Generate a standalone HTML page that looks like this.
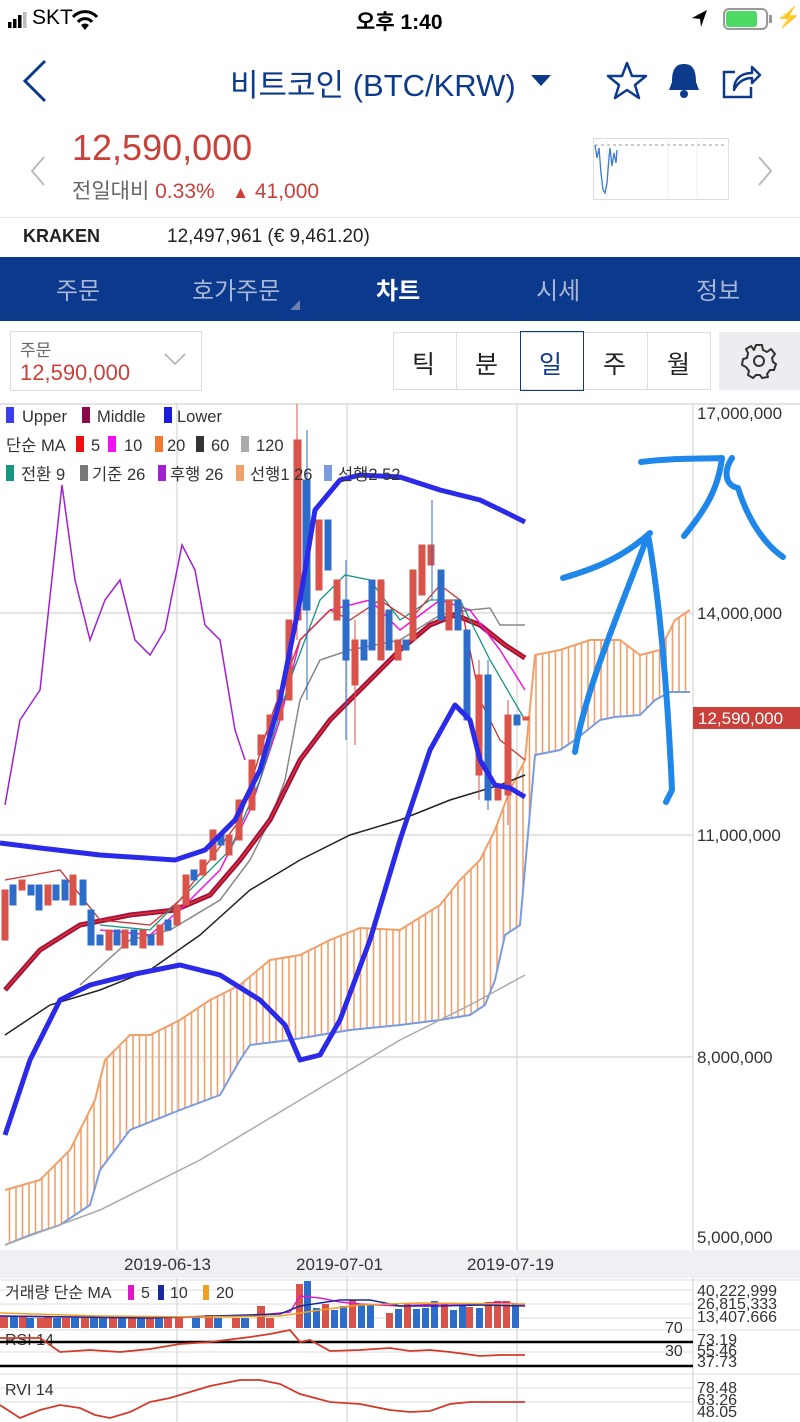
<!DOCTYPE html>
<html><head><meta charset="utf-8"><style>
*{margin:0;padding:0;box-sizing:border-box}
body{width:800px;height:1422px;overflow:hidden;background:#fff;font-family:"Liberation Sans","Noto Sans CJK KR",sans-serif;position:relative}
.a{position:absolute;white-space:nowrap}
</style></head><body>
<!-- status bar -->
<div class="a" style="left:8px;top:10px;width:14px;height:18px">
<svg width="36" height="20"><rect x="0" y="12" width="3.5" height="6" fill="#000"/><rect x="5" y="9" width="3.5" height="9" fill="#000"/><rect x="10" y="5" width="3.5" height="13" fill="#000"/><rect x="15" y="2" width="3.5" height="16" fill="#bbb"/></svg></div>
<div class="a" style="left:32px;top:6px;font-size:21px">SKT</div>
<svg class="a" style="left:70px;top:8px" width="32" height="24"><path d="M3 9 A16 16 0 0 1 27 9" stroke="#000" stroke-width="3" fill="none"/><path d="M8 14 A9 9 0 0 1 22 14" stroke="#000" stroke-width="3" fill="none"/><path d="M15 22 L11 17 A6 6 0 0 1 19 17Z" fill="#000"/></svg>
<div class="a" style="left:356px;top:6px;font-size:21px;font-weight:bold">오후 1:40</div>
<svg class="a" style="left:690px;top:8px" width="20" height="22"><path d="M17 2 L2 10 L10 11 L11 19Z" fill="#000"/></svg>
<div class="a" style="left:723px;top:8px;width:45px;height:22px;border:2px solid #999;border-radius:6px"></div>
<div class="a" style="left:726px;top:11px;width:31px;height:16px;background:#4cd964;border-radius:3px"></div>
<div class="a" style="left:769px;top:15px;width:3px;height:8px;background:#999"></div>
<div class="a" style="left:776px;top:5px;font-size:20px">⚡</div>
<!-- nav -->
<svg class="a" style="left:20px;top:58px" width="30" height="46"><path d="M25 3 L5 23 L25 43" stroke="#0d3a8a" stroke-width="3" fill="none"/></svg>
<div class="a" style="left:230px;top:60px;font-size:31px;color:#0d3a8a">비트코인 (BTC/KRW)</div>
<svg class="a" style="left:530px;top:74px" width="22" height="14"><path d="M1 1 L21 1 L11 12Z" fill="#0d3a8a"/></svg>
<svg class="a" style="left:606px;top:60px" width="44" height="40"><path d="M21 3 L26 16 L40 16 L29 25 L33 38 L21 30 L9 38 L13 25 L2 16 L16 16Z" stroke="#0d3a8a" stroke-width="2.5" fill="none" stroke-linejoin="round"/></svg>
<svg class="a" style="left:664px;top:60px" width="40" height="42"><path d="M20 4 C10 4 8 12 8 22 L5 30 L35 30 L32 22 C32 12 30 4 20 4Z" fill="#0d3a8a"/><circle cx="20" cy="34" r="4" fill="#0d3a8a"/></svg>
<svg class="a" style="left:720px;top:60px" width="42" height="42"><path d="M15 12 L4 12 L4 37 L31 37 L31 27" stroke="#0d3a8a" stroke-width="2.5" fill="none"/><path d="M14 30 C14 18 22 13 32 13 L32 7 L40 15 L32 23 L32 18 C24 18 18 22 14 30Z" stroke="#0d3a8a" stroke-width="2.5" fill="none" stroke-linejoin="round"/></svg>
<!-- price -->
<svg class="a" style="left:28px;top:155px" width="20" height="32"><path d="M16 2 L4 16 L16 30" stroke="#bbb" stroke-width="2" fill="none"/></svg>
<svg class="a" style="left:755px;top:155px" width="20" height="32"><path d="M4 2 L16 16 L4 30" stroke="#bbb" stroke-width="2" fill="none"/></svg>
<div class="a" style="left:72px;top:127px;font-size:36px;color:#c9413a">12,590,000</div>
<div class="a" style="left:72px;top:175px;font-size:21px;color:#666">전일대비 <span style="color:#c9413a">0.33% &nbsp; <span style="font-size:17px">▲</span> 41,000</span></div>
<div class="a" style="left:593px;top:138px;width:136px;height:62px;border:1px solid #ddd"></div>
<svg class="a" style="left:593px;top:138px" width="136" height="62"><line x1="2" y1="7" x2="134" y2="7" stroke="#999" stroke-dasharray="3,3"/><line x1="14" y1="2" x2="14" y2="60" stroke="#eee"/><line x1="75" y1="2" x2="75" y2="60" stroke="#eee"/><line x1="104" y1="2" x2="104" y2="60" stroke="#eee"/><polyline points="2,7 4,20 6,10 8,35 10,52 12,55 14,45 16,20 17,10 19,28 21,15 23,25 24,12" stroke="#3b7ad0" stroke-width="1.3" fill="none"/></svg>
<div class="a" style="left:0;top:217px;width:800px;height:1px;background:#e5e5e5"></div>
<div class="a" style="left:23px;top:226px;font-size:18px;font-weight:bold;color:#222">KRAKEN</div>
<div class="a" style="left:167px;top:226px;font-size:19px;color:#222">12,497,961 (€ 9,461.20)</div>
<!-- tabs -->
<div class="a" style="left:0;top:257px;width:800px;height:64px;background:#0b3a8c"></div>
<div class="a" style="left:56px;top:271px;font-size:24px;color:#aab6d6">주문</div>
<div class="a" style="left:192px;top:271px;font-size:24px;color:#aab6d6">호가주문</div>
<svg class="a" style="left:290px;top:300px" width="10" height="10"><path d="M0 10 L10 10 L10 0Z" fill="#6b7fb5"/></svg>
<div class="a" style="left:376px;top:271px;font-size:24px;color:#fff;font-weight:bold">차트</div>
<div class="a" style="left:536px;top:271px;font-size:24px;color:#aab6d6">시세</div>
<div class="a" style="left:696px;top:271px;font-size:24px;color:#aab6d6">정보</div>
<!-- controls -->
<div class="a" style="left:10px;top:331px;width:192px;height:60px;border:1.5px solid #ddd"></div>
<div class="a" style="left:20px;top:336px;font-size:17px;color:#666">주문</div>
<div class="a" style="left:20px;top:360px;font-size:22px;color:#c9413a">12,590,000</div>
<svg class="a" style="left:163px;top:352px" width="24" height="16"><path d="M2 2 L12 12 L22 2" stroke="#aaa" stroke-width="1.5" fill="none"/></svg>
<div class="a" style="left:393px;top:332px;width:318px;height:58px;border:1px solid #ddd"></div>
<div class="a" style="left:456px;top:332px;width:1px;height:58px;background:#ddd"></div>
<div class="a" style="left:583px;top:332px;width:1px;height:58px;background:#ddd"></div>
<div class="a" style="left:647px;top:332px;width:1px;height:58px;background:#ddd"></div>
<div class="a" style="left:520px;top:331px;width:64px;height:60px;border:1.5px solid #0d3a8a"></div>
<div class="a" style="left:412px;top:345px;font-size:25px;color:#222">틱</div>
<div class="a" style="left:475px;top:345px;font-size:25px;color:#222">분</div>
<div class="a" style="left:539px;top:345px;font-size:25px;color:#0d3a8a">일</div>
<div class="a" style="left:603px;top:345px;font-size:25px;color:#222">주</div>
<div class="a" style="left:667px;top:345px;font-size:25px;color:#222">월</div>
<div class="a" style="left:719px;top:332px;width:81px;height:58px;background:#ebedf0"></div>
<svg class="a" style="left:741px;top:343px" width="36" height="36"><path d="M15 2 L21 2 L22 7 L26 9 L30 6 L34 11 L31 15 L32 19 L35 21 L33 27 L29 27 L26 31 L27 34 L21 35 L19 32 L15 32 L12 35 L7 32 L8 28 L5 24 L1 22 L2 16 L6 15 L7 10 L5 6 L10 3 L13 7Z" stroke="#333" stroke-width="2" fill="none" stroke-linejoin="round"/><circle cx="18" cy="18" r="5" stroke="#333" stroke-width="2" fill="none"/></svg>
<!-- chart -->
<svg class="a" style="left:0;top:398px" width="800" height="1024" viewBox="0 398 800 1024">
<defs><pattern id="hp" width="6.5" height="10" patternUnits="userSpaceOnUse"><line x1="3" y1="0" x2="3" y2="10" stroke="#f2a06a" stroke-width="1.6"/></pattern></defs>
<g stroke="#d4d4d4" stroke-width="1.2">
<line x1="0" y1="404" x2="800" y2="404"/><line x1="0" y1="613" x2="693" y2="613"/><line x1="0" y1="835" x2="693" y2="835"/><line x1="0" y1="1057" x2="693" y2="1057"/>
<line x1="177" y1="404" x2="177" y2="1422"/><line x1="347" y1="404" x2="347" y2="1422"/><line x1="517" y1="404" x2="517" y2="1422"/><line x1="693" y1="404" x2="693" y2="1422"/>
</g>
<rect x="0" y="1250" width="800" height="28" fill="#eef0f3"/>
<!-- cloud -->
<polygon fill="url(#hp)" points="5,1190 40,1180 70,1150 95,1100 105,1060 130,1035 150,1035 180,1020 210,1000 240,985 270,960 300,955 330,940 360,928 400,930 440,905 460,880 480,860 495,830 510,790 525,760 535,655 560,650 590,640 620,640 640,655 660,650 675,620 690,610 690,692 670,692 655,700 640,715 615,717 600,720 575,740 560,750 535,755 520,925 505,935 495,980 485,1005 470,1015 440,1020 400,1025 350,1030 320,1035 290,1040 250,1045 240,1060 220,1095 180,1110 130,1130 100,1170 90,1205 60,1225 30,1235 5,1245"/>
<polyline fill="none" stroke="#f2a06a" stroke-width="2" points="5,1190 40,1180 70,1150 95,1100 105,1060 130,1035 150,1035 180,1020 210,1000 240,985 270,960 300,955 330,940 360,928 400,930 440,905 460,880 480,860 495,830 510,790 525,760 535,655 560,650 590,640 620,640 640,655 660,650 675,620 690,610"/>
<polyline fill="none" stroke="#7b9be0" stroke-width="2" points="5,1245 30,1235 60,1225 90,1205 100,1170 130,1130 180,1110 220,1095 240,1060 250,1045 290,1040 320,1035 350,1030 400,1025 440,1020 470,1015 485,1005 495,980 505,935 520,925 535,755 560,750 575,740 600,720 615,717 640,715 655,700 670,692 690,692"/>
<polyline fill="none" stroke="#aaa" stroke-width="1.5" points="5,1245 100,1210 200,1160 300,1100 400,1040 470,1005 525,975"/>
<polyline fill="none" stroke="#222" stroke-width="1.5" points="5,1035 50,1005 100,990 150,970 200,935 250,890 300,860 350,835 400,820 450,800 500,785 525,775"/>
<polyline fill="none" stroke="#888" stroke-width="1.5" points="80,985 130,940 170,930 220,900 250,860 270,820 285,780 300,700 320,660 350,650 400,640 440,615 470,610 490,608 500,625 525,625"/>
<polyline fill="none" stroke="#a020d0" stroke-width="1.5" points="5,805 20,720 40,690 62,485 75,580 90,640 105,600 120,580 135,640 150,655 165,630 182,545 195,570 205,625 220,640 235,730 245,760"/>
<polyline fill="none" stroke="#9b1040" stroke-width="5" points="5,990 40,950 80,925 130,915 175,910 210,895 240,860 270,820 300,760 330,720 360,690 400,650 430,625 455,615 480,625 505,645 525,658"/>
<polyline fill="none" stroke="#e23030" stroke-width="1.5" points="5,990 40,950 80,925 130,915 175,910 210,895 240,860 270,820 300,760 330,720 360,690 400,650 430,625 455,615 480,625 505,645 525,658"/>
<polyline fill="none" stroke="#f018e0" stroke-width="1.5" points="100,930 150,935 180,910 220,870 250,810 280,720 300,640 330,610 370,600 400,630 440,600 470,610 500,650 525,690"/>
<polyline fill="none" stroke="#169680" stroke-width="1.3" points="100,925 150,930 180,900 230,850 260,780 290,680 320,600 345,575 370,580 400,620 430,600 460,600 490,660 525,720"/>
<polyline fill="none" stroke="#d23030" stroke-width="1.3" points="5,880 60,870 100,920 150,925 180,900 210,860 240,820 270,720 300,640 330,610 350,620 380,600 410,620 440,585 460,600 480,700 500,740 525,760"/>
<!-- candles -->
<g stroke-width="1">
<g fill="#d9534a" stroke="#d9534a">
<rect x="2" y="890" width="6" height="50"/><rect x="19" y="880" width="6" height="10"/><rect x="45" y="885" width="6" height="20"/><rect x="70" y="875" width="6" height="30"/><rect x="106" y="930" width="6" height="20"/><rect x="122" y="930" width="6" height="18"/><rect x="140" y="930" width="6" height="18"/><rect x="157" y="925" width="6" height="20"/><rect x="174" y="905" width="6" height="20"/><rect x="183" y="875" width="6" height="30"/><rect x="200" y="860" width="6" height="15"/><rect x="210" y="830" width="6" height="30"/><rect x="226" y="835" width="6" height="20"/><rect x="236" y="800" width="6" height="40"/><rect x="249" y="760" width="6" height="50"/><rect x="258" y="735" width="6" height="20"/><rect x="267" y="715" width="6" height="20"/><rect x="277" y="690" width="6" height="30"/><rect x="286" y="620" width="6" height="80"/><rect x="294" y="440" width="7" height="180"/><rect x="316" y="520" width="6" height="70"/><rect x="334" y="580" width="6" height="40"/><rect x="352" y="640" width="6" height="45"/><rect x="378" y="580" width="6" height="80"/><rect x="395" y="640" width="6" height="20"/><rect x="410" y="570" width="6" height="70"/><rect x="419" y="545" width="6" height="50"/><rect x="428" y="545" width="6" height="20"/><rect x="446" y="600" width="6" height="30"/><rect x="476" y="675" width="6" height="100"/><rect x="495" y="785" width="6" height="15"/><rect x="505" y="715" width="6" height="80"/><rect x="523" y="717" width="6" height="3"/>
</g>
<g fill="#2d6cc8" stroke="#2d6cc8">
<rect x="10" y="885" width="6" height="20"/><rect x="28" y="885" width="6" height="10"/><rect x="36" y="885" width="6" height="25"/><rect x="53" y="885" width="6" height="15"/><rect x="62" y="880" width="6" height="20"/><rect x="80" y="880" width="6" height="25"/><rect x="88" y="910" width="6" height="35"/><rect x="97" y="935" width="6" height="10"/><rect x="114" y="930" width="6" height="15"/><rect x="131" y="930" width="6" height="15"/><rect x="148" y="935" width="6" height="10"/><rect x="165" y="920" width="6" height="10"/><rect x="191" y="870" width="6" height="10"/><rect x="218" y="835" width="6" height="10"/><rect x="303" y="480" width="7" height="130"/><rect x="325" y="520" width="6" height="50"/><rect x="343" y="600" width="6" height="60"/><rect x="361" y="640" width="6" height="20"/><rect x="369" y="580" width="6" height="70"/><rect x="386" y="610" width="6" height="40"/><rect x="403" y="640" width="6" height="10"/><rect x="438" y="570" width="6" height="50"/><rect x="455" y="600" width="6" height="30"/><rect x="464" y="630" width="6" height="90"/><rect x="485" y="675" width="6" height="125"/><rect x="514" y="715" width="6" height="10"/>
</g>
<line x1="297" y1="404" x2="297" y2="640" stroke="#d9534a"/><line x1="307" y1="430" x2="307" y2="700" stroke="#2d6cc8"/><line x1="432" y1="500" x2="432" y2="600" stroke="#2d6cc8"/><line x1="346" y1="560" x2="346" y2="740" stroke="#2d6cc8"/><line x1="355" y1="620" x2="355" y2="745" stroke="#d9534a"/><line x1="488" y1="660" x2="488" y2="810" stroke="#2d6cc8"/><line x1="508" y1="700" x2="508" y2="825" stroke="#d9534a"/><line x1="479" y1="660" x2="479" y2="800" stroke="#d9534a"/>
</g>
<polyline fill="none" stroke="#2a2ae8" stroke-width="5" stroke-linejoin="round" points="0,843 40,848 100,855 175,860 205,850 235,820 260,770 280,700 300,600 315,510 340,480 360,475 400,477 440,490 480,500 505,512 525,522"/>
<polyline fill="none" stroke="#2a2ae8" stroke-width="5" stroke-linejoin="round" points="5,1135 30,1060 60,1000 90,985 130,975 180,965 220,975 260,1000 285,1025 300,1060 320,1055 340,1020 370,940 400,840 430,750 455,705 470,720 480,760 495,785 510,788 525,797"/>
<!-- legend -->
<g font-size="16.5" fill="#333" font-family="Liberation Sans, Noto Sans CJK KR, sans-serif">
<rect x="6" y="407" width="8" height="16" fill="#3b3bf0"/><text x="22" y="422">Upper</text>
<rect x="82" y="407" width="8" height="16" fill="#8b0a4a"/><text x="97" y="422">Middle</text>
<rect x="164" y="407" width="8" height="16" fill="#1a1ae0"/><text x="177" y="422">Lower</text>
<text x="6" y="451">단순 MA</text>
<rect x="76" y="436" width="8" height="16" fill="#ee1010"/><text x="91" y="451">5</text>
<rect x="108" y="436" width="8" height="16" fill="#f010f0"/><text x="124" y="451">10</text>
<rect x="155" y="436" width="8" height="16" fill="#f07a30"/><text x="167" y="451">20</text>
<rect x="196" y="436" width="8" height="16" fill="#333"/><text x="211" y="451">60</text>
<rect x="241" y="436" width="8" height="16" fill="#aaa"/><text x="256" y="451">120</text>
<rect x="6" y="465" width="8" height="16" fill="#169680"/><text x="21" y="480">전환 9</text>
<rect x="80" y="465" width="8" height="16" fill="#777"/><text x="92" y="480">기준 26</text>
<rect x="158" y="465" width="8" height="16" fill="#a020d0"/><text x="170" y="480">후행 26</text>
<rect x="236" y="465" width="8" height="16" fill="#f2a06a"/><text x="250" y="480">선행1 26</text>
<rect x="324" y="465" width="8" height="16" fill="#7b9be0"/><text x="338" y="480">선행2 52</text>
</g>
<!-- axis labels -->
<g font-size="17" fill="#333" font-family="Liberation Sans, sans-serif">
<text x="697" y="419">17,000,000</text><text x="697" y="619">14,000,000</text><text x="697" y="841">11,000,000</text><text x="697" y="1063">8,000,000</text><text x="697" y="1243">5,000,000</text>
<text x="124" y="1270">2019-06-13</text><text x="296" y="1270">2019-07-01</text><text x="467" y="1270">2019-07-19</text>
</g>
<rect x="693" y="707" width="107" height="22" fill="#c9413a"/><text x="698" y="724" font-size="17" fill="#fff" font-family="Liberation Sans, sans-serif">12,590,000</text>
<!-- hand drawing -->
<g fill="none" stroke="#1f86ea" stroke-width="6" stroke-linecap="round" stroke-linejoin="round">
<path d="M563 578 C590 570 620 560 650 533"/>
<path d="M575 752 C585 690 620 610 648 535 C660 600 668 700 672 790 L666 802"/>
<path d="M641 462 C670 458 700 459 722 458 C718 490 705 510 684 536"/>
<path d="M732 458 C724 470 724 485 738 488 C748 520 765 545 783 557"/>
</g>
<!-- volume -->
<g stroke="#ddd" stroke-width="1"><line x1="0" y1="1280" x2="800" y2="1280"/><line x1="0" y1="1290" x2="693" y2="1290"/><line x1="0" y1="1304" x2="693" y2="1304"/><line x1="0" y1="1318" x2="693" y2="1318"/><line x1="0" y1="1330" x2="800" y2="1330"/><line x1="0" y1="1352" x2="693" y2="1352"/><line x1="0" y1="1374" x2="800" y2="1374"/><line x1="0" y1="1388" x2="693" y2="1388"/><line x1="0" y1="1402" x2="693" y2="1402"/></g>
<g fill="#d9534a"><rect x="0" y="1317" width="8" height="11"/><rect x="19" y="1316" width="8" height="12"/><rect x="37" y="1318" width="8" height="10"/><rect x="44" y="1316" width="8" height="12"/><rect x="62" y="1318" width="8" height="10"/><rect x="81" y="1318" width="8" height="10"/><rect x="109" y="1317" width="8" height="11"/><rect x="128" y="1318" width="8" height="10"/><rect x="146" y="1318" width="8" height="10"/><rect x="164" y="1316" width="8" height="12"/><rect x="175" y="1318" width="8" height="10"/><rect x="205" y="1315" width="8" height="13"/><rect x="232" y="1318" width="8" height="10"/><rect x="257" y="1306" width="8" height="22"/><rect x="266" y="1318" width="8" height="10"/><rect x="296" y="1284" width="7" height="44"/><rect x="322" y="1304" width="7" height="24"/><rect x="349" y="1300" width="7" height="28"/><rect x="386" y="1313" width="7" height="15"/><rect x="404" y="1303" width="7" height="25"/><rect x="441" y="1304" width="7" height="24"/><rect x="466" y="1307" width="7" height="21"/><rect x="485" y="1302" width="7" height="26"/><rect x="494" y="1301" width="7" height="27"/><rect x="503" y="1301" width="7" height="27"/></g>
<g fill="#2d6cc8"><rect x="10" y="1316" width="8" height="12"/><rect x="26" y="1318" width="8" height="10"/><rect x="53" y="1318" width="8" height="10"/><rect x="71" y="1318" width="8" height="10"/><rect x="90" y="1318" width="8" height="10"/><rect x="99" y="1318" width="8" height="10"/><rect x="118" y="1316" width="8" height="12"/><rect x="137" y="1318" width="8" height="10"/><rect x="155" y="1316" width="8" height="12"/><rect x="192" y="1316" width="8" height="12"/><rect x="214" y="1318" width="8" height="10"/><rect x="241" y="1318" width="8" height="10"/><rect x="304" y="1281" width="7" height="47"/><rect x="313" y="1308" width="7" height="20"/><rect x="331" y="1310" width="7" height="18"/><rect x="340" y="1306" width="7" height="22"/><rect x="358" y="1304" width="7" height="24"/><rect x="367" y="1305" width="7" height="23"/><rect x="395" y="1309" width="7" height="19"/><rect x="413" y="1309" width="7" height="19"/><rect x="422" y="1308" width="7" height="20"/><rect x="431" y="1301" width="7" height="27"/><rect x="450" y="1310" width="7" height="18"/><rect x="459" y="1305" width="7" height="23"/><rect x="476" y="1308" width="7" height="20"/><rect x="512" y="1304" width="7" height="24"/></g>
<polyline fill="none" stroke="#e019c8" stroke-width="1.5" points="0,1316 150,1318 250,1316 290,1312 300,1296 320,1298 340,1302 360,1304 400,1306 440,1304 480,1304 500,1302 525,1305"/>
<polyline fill="none" stroke="#1a2a9a" stroke-width="1.5" points="0,1316 150,1318 280,1314 300,1306 340,1300 370,1300 400,1306 440,1306 480,1305 525,1306"/>
<polyline fill="none" stroke="#f0a020" stroke-width="1.5" points="0,1313 100,1316 200,1317 280,1316 320,1310 360,1305 420,1303 525,1304"/>
<g font-size="16" fill="#333" font-family="Liberation Sans, Noto Sans CJK KR, sans-serif">
<text x="5" y="1298">거래량 단순 MA</text><rect x="128" y="1285" width="6" height="15" fill="#e019c8"/><text x="141" y="1298">5</text><rect x="158" y="1285" width="6" height="15" fill="#1a2a9a"/><text x="170" y="1298">10</text><rect x="203" y="1285" width="6" height="15" fill="#f0a020"/><text x="216" y="1298">20</text>
<text x="697" y="1296">40,222,999</text><text x="697" y="1309">26,815,333</text><text x="697" y="1322">13,407.666</text>
<text x="5" y="1345">RSI 14</text><text x="665" y="1333">70</text><text x="665" y="1356">30</text>
<text x="697" y="1345">73.19</text><text x="697" y="1356">55.46</text><text x="697" y="1367">37.73</text>
<text x="5" y="1395">RVI 14</text>
<text x="697" y="1393">78.48</text><text x="697" y="1405">63.26</text><text x="697" y="1417">48.05</text>
</g>
<line x1="0" y1="1342" x2="693" y2="1342" stroke="#000" stroke-width="2.5"/><line x1="0" y1="1366" x2="693" y2="1366" stroke="#000" stroke-width="2.5"/>
<polyline fill="none" stroke="#d23a2a" stroke-width="1.8" points="0,1338 40,1338 60,1352 90,1350 120,1352 150,1349 180,1344 210,1342 250,1337 270,1334 290,1330 300,1342 310,1340 330,1351 360,1350 390,1348 410,1351 430,1350 450,1352 480,1356 500,1355 525,1355"/>
<polyline fill="none" stroke="#d23a2a" stroke-width="1.8" points="0,1405 20,1418 40,1410 60,1405 80,1408 95,1415 110,1418 130,1412 150,1402 170,1398 190,1392 210,1386 240,1380 260,1380 280,1384 300,1394 330,1402 360,1404 390,1410 410,1412 430,1411 450,1404 470,1402 490,1402 525,1402"/>
</svg>
</body></html>
